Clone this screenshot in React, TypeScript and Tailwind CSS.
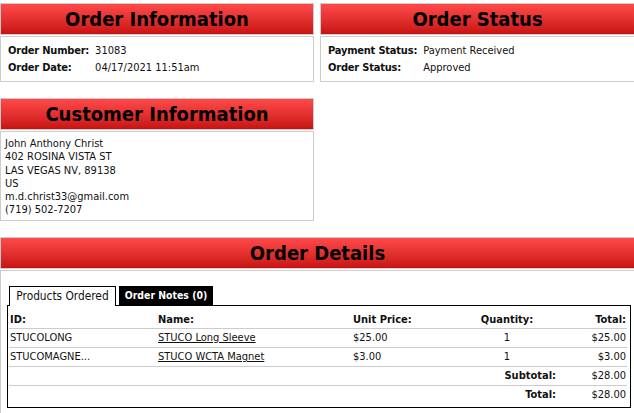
const font = "font-['DejaVu_Sans_Condensed','DejaVu_Sans',sans-serif]"

function SectionHeader({ title }: { title: string }) {
  return (
    <div className="flex h-[32px] items-center justify-center border border-[#cccccc] bg-linear-to-b from-[#ff4949] to-[#c81212] text-[20px] leading-none font-bold text-black">
      {title}
    </div>
  )
}

function InfoRows({ rows }: { rows: [string, string][] }) {
  return (
    <div className="grid grid-cols-[auto_1fr] gap-x-[6px] pt-[6px] pb-[4px] pl-[7px]">
      {rows.map(([label, value]) => (
        <div key={label} className="contents">
          <div className="flex h-[17px] items-center font-bold tracking-[-0.2px]">{label}</div>
          <div className="flex h-[17px] items-center">{value}</div>
        </div>
      ))}
    </div>
  )
}

const products = [
  { id: 'STUCOLONG', name: 'STUCO Long Sleeve', price: '$25.00', qty: '1', total: '$25.00' },
  { id: 'STUCOMAGNE...', name: 'STUCO WCTA Magnet', price: '$3.00', qty: '1', total: '$3.00' },
]

const cols = 'grid grid-cols-[148px_195px_106px_98px_1fr]'

export default function App() {
  return (
    <div className={`w-[634px] overflow-hidden bg-white text-[11px] text-[#111] ${font}`}>
      <div className="w-[635px] pt-[3px]">
        <div className="grid grid-cols-[314px_315px] gap-x-[6px]">
          <section>
            <SectionHeader title="Order Information" />
            <div className="mt-[1px] border border-[#cccccc]">
              <InfoRows
                rows={[
                  ['Order Number:', '31083'],
                  ['Order Date:', '04/17/2021 11:51am'],
                ]}
              />
            </div>
          </section>
          <section>
            <SectionHeader title="Order Status" />
            <div className="mt-[1px] border border-[#cccccc]">
              <InfoRows
                rows={[
                  ['Payment Status:', 'Payment Received'],
                  ['Order Status:', 'Approved'],
                ]}
              />
            </div>
          </section>
        </div>

        <section className="mt-[16px] w-[314px]">
          <SectionHeader title="Customer Information" />
          <div className="mt-[1px] h-[90px] border border-[#cccccc] pt-[5px] pl-[4px] leading-[13.3px]">
            <div>John Anthony Christ</div>
            <div>402 ROSINA VISTA ST</div>
            <div>LAS VEGAS NV, 89138</div>
            <div>US</div>
            <div>m.d.christ33@gmail.com</div>
            <div>(719) 502-7207</div>
          </div>
        </section>

        <section className="mt-[16px]">
          <SectionHeader title="Order Details" />
          <div className="mt-[1px] border border-[#cccccc] pt-[15px] pb-[10px] pl-[6px]">
            <div className="ml-[2px] flex gap-[3px]">
              <div className="relative z-10 -mb-[1px] flex h-[20px] w-[107px] items-center justify-center border border-b-0 border-black bg-white text-[11.8px]">
                Products Ordered
              </div>
              <div className="flex h-[19px] w-[94px] items-center justify-center bg-black text-[10.4px] font-bold text-white">
                Order Notes (0)
              </div>
            </div>
            <div className="w-[624px] border border-black pr-[3px] pb-[3px] pl-[1px]">
              <div className={`${cols} h-[22px] items-end pb-[2px] leading-[13px] font-bold`}>
                <div className="pl-[1px]">ID:</div>
                <div className="pl-[1px]">Name:</div>
                <div className="pl-[1px]">Unit Price:</div>
                <div className="text-center">Quantity:</div>
                <div className="pr-[1px] text-right">Total:</div>
              </div>
              {products.map((p) => (
                <div key={p.id} className={`${cols} h-[19px] items-center border-t border-[#cccccc] pt-[1px]`}>
                  <div className="pl-[1px]">{p.id}</div>
                  <div className="pl-[1px]">
                    <a href="#" className="underline">
                      {p.name}
                    </a>
                  </div>
                  <div className="pl-[1px]">{p.price}</div>
                  <div className="text-center">{p.qty}</div>
                  <div className="pr-[1px] text-right">{p.total}</div>
                </div>
              ))}
              <div className={`${cols} h-[19px] items-center border-t border-[#cccccc] pt-[1px]`}>
                <div />
                <div />
                <div />
                <div className="text-right font-bold">Subtotal:</div>
                <div className="pr-[1px] text-right">$28.00</div>
              </div>
              <div className={`${cols} h-[19px] items-center border-t border-[#cccccc] pt-[1px]`}>
                <div />
                <div />
                <div />
                <div className="text-right font-bold">Total:</div>
                <div className="pr-[1px] text-right">$28.00</div>
              </div>
            </div>
          </div>
        </section>
      </div>
    </div>
  )
}
